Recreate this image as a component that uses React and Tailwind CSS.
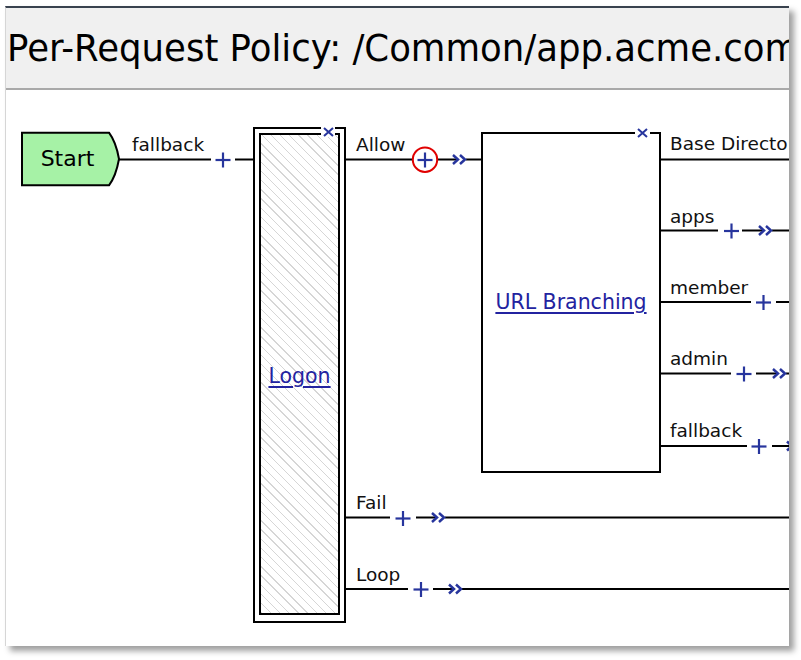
import React from 'react';

const BLUE = '#27359d';

// connector segments in page coordinates: [x1, x2, y]
const wires = [
  [118, 211, 159.5], [235, 253, 159.5],
  [345, 412, 159.5], [438, 457, 159.5], [466, 481, 159.5],
  [660, 789, 159.5],
  [660, 718, 230.5], [742, 763, 230.5], [772, 789, 230.5],
  [660, 751, 302], [776, 789, 302],
  [660, 731, 373.5], [756, 777, 373.5], [786, 789, 373.5],
  [660, 747, 446], [772, 789, 446],
  [345, 390, 517.5], [416, 436, 517.5], [445, 789, 517.5],
  [345, 408, 589], [433, 453, 589], [462, 789, 589],
];

const pluses = [
  [223, 160], [425, 160], [731.5, 231], [763.5, 302.5],
  [744, 374], [759, 446.5], [403, 518.5], [421, 589.5],
];

const chevrons = [
  [453, 159.5], [759, 230.5], [773, 373.5], [787, 446], [432, 517.5], [449, 589],
];

const labels = [
  { text: 'fallback', pos: 'left-[126px] top-[46px]' },
  { text: 'Allow', pos: 'left-[350px] top-[46px]' },
  { text: 'Base Directory', pos: 'left-[664px] top-[45px]' },
  { text: 'apps', pos: 'left-[664px] top-[118px]' },
  { text: 'member', pos: 'left-[664px] top-[189px]' },
  { text: 'admin', pos: 'left-[664px] top-[260px]' },
  { text: 'fallback', pos: 'left-[664px] top-[332px]' },
  { text: 'Fail', pos: 'left-[350px] top-[404px]' },
  { text: 'Loop', pos: 'left-[350px] top-[476px]' },
];

function Plus({ x, y }) {
  return (
    <g stroke={BLUE} strokeWidth="2.2">
      <line x1={x - 7.5} y1={y} x2={x + 7.5} y2={y} />
      <line x1={x} y1={y - 7.5} x2={x} y2={y + 7.5} />
    </g>
  );
}

function Chevrons({ x, y }) {
  return (
    <g stroke={BLUE} strokeWidth="2.5" fill="none">
      <polyline points={`${x},${y - 4.5} ${x + 5},${y} ${x},${y + 4.5}`} />
      <polyline points={`${x + 7},${y - 4.5} ${x + 12},${y} ${x + 7},${y + 4.5}`} />
    </g>
  );
}

function CloseMark() {
  return (
    <svg width="11" height="10" viewBox="0 0 11 10">
      <path d="M1 1 L10 9 M10 1 L1 9" stroke={BLUE} strokeWidth="2" fill="none" />
    </svg>
  );
}

export default function App() {
  return (
    <div className="w-[801px] h-[660px] bg-white overflow-hidden">
      <div className="ml-[5px] mt-[6px] w-[784px] h-[640px] flex flex-col border-t-2 border-t-[#39424f] border-l border-l-[#d6d6d6] bg-white overflow-hidden shadow-[5px_5px_6px_rgba(0,0,0,0.38)]">
        <div className="h-[82px] shrink-0 bg-[#f0f0f0] border-b-2 border-b-[#a9a9a9] pt-[21px] pl-[1px] whitespace-nowrap overflow-hidden">
          <div className="font-['DejaVu_Sans',sans-serif] text-[35.5px] leading-none text-black origin-top scale-y-[1.05]">
            Per-Request Policy: /Common/app.acme.com
          </div>
        </div>

        <div className="relative flex-1 overflow-hidden font-['DejaVu_Sans',sans-serif]">
          <svg className="absolute left-0 top-0" width="783" height="556" viewBox="6 90 783 556">
            <path
              d="M22 132.7 H109 Q116 142 119 159 Q116 176 109 185.3 H22 Z"
              fill="#a6f2a6"
              stroke="#000"
              strokeWidth="2"
            />
            {wires.map(([x1, x2, y], i) => (
              <line key={i} x1={x1} y1={y} x2={x2} y2={y} stroke="#000" strokeWidth="2" />
            ))}
            <circle cx="425" cy="159.7" r="12.2" fill="#fff" stroke="#e00000" strokeWidth="2" />
            {pluses.map(([x, y], i) => (
              <Plus key={i} x={x} y={y} />
            ))}
            {chevrons.map(([x, y], i) => (
              <Chevrons key={i} x={x} y={y} />
            ))}
          </svg>

          <div className="absolute left-[15px] top-[42px] w-[93px] h-[54px] flex items-center justify-center text-[22px] leading-none text-black">
            Start
          </div>

          {/* Logon node */}
          <div className="absolute left-[247px] top-[37px] w-[93px] h-[496px] border-2 border-black bg-white p-[4px] pb-[6px]">
            <div className="h-full border-2 border-black flex items-center justify-center pt-[5px] bg-[repeating-linear-gradient(45deg,#d6d6d6_0px,#d6d6d6_1px,#ffffff_1px,#ffffff_6.5px)]">
              <span className="text-[20.5px] leading-none text-[#2323a0] underline underline-offset-[3px]">Logon</span>
            </div>
          </div>
          <div className="absolute left-[315px] top-[36px] w-[14px] h-[11px] bg-white flex items-center justify-center">
            <CloseMark />
          </div>

          {/* URL Branching node */}
          <div className="absolute left-[475px] top-[42px] w-[180px] h-[341px] border-2 border-black bg-white flex items-center justify-center">
            <span className="text-[20.5px] leading-none text-[#2323a0] underline underline-offset-[3px]">URL Branching</span>
          </div>
          <div className="absolute left-[629px] top-[38px] w-[15px] h-[10px] bg-white flex items-center justify-center">
            <CloseMark />
          </div>

          {labels.map((l, i) => (
            <div key={i} className={`absolute ${l.pos} text-[18.5px] leading-none text-[#111] whitespace-nowrap`}>
              {l.text}
            </div>
          ))}
        </div>
      </div>
    </div>
  );
}
